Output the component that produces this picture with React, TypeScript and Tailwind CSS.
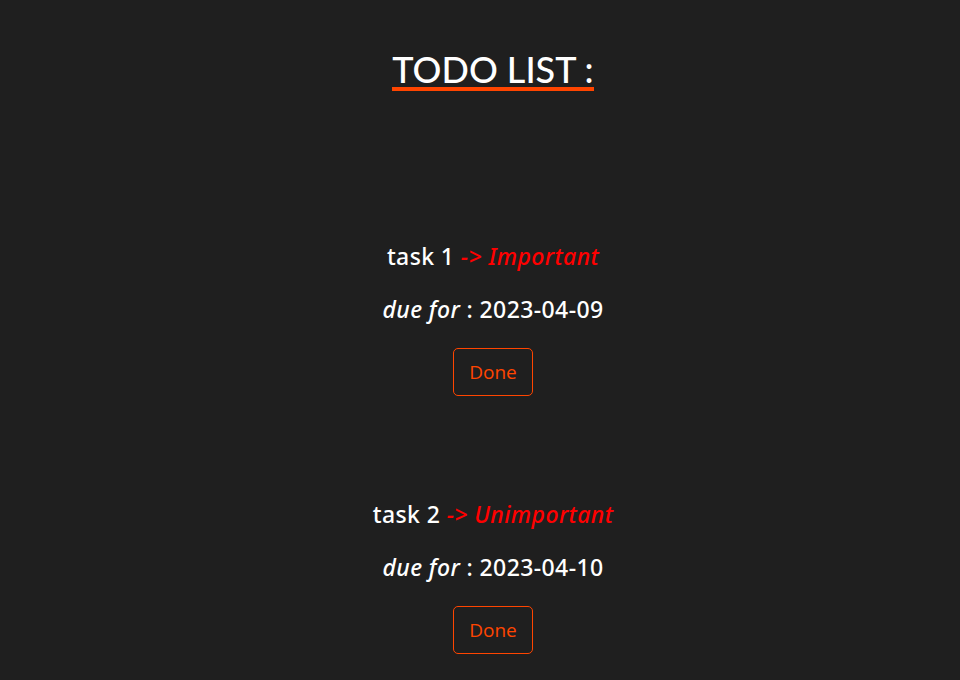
import React from "react";

const tasks = [
  { name: "task 1", label: "Important", due: "2023-04-09" },
  { name: "task 2", label: "Unimportant", due: "2023-04-10" },
];

export default function App() {
  return (
    <div className="min-h-[680px] w-full bg-[#1f1f1f] text-white flex flex-col items-center pl-[26px]" style={{ fontFamily: "Lato, 'Noto Sans', sans-serif" }}>
      <h1 className="mt-[50px] text-[36px] leading-[38px] font-medium">
        <span className="inline-block border-b-4 border-[#ff4500] leading-[35px]">TODO LIST :</span>
      </h1>
      <div className="mt-[150px] flex flex-col items-center gap-[103px]">
        {tasks.map((t) => (
          <div key={t.name} className="flex flex-col items-center">
            <p className="text-[23px] leading-[30px] font-medium tracking-[0.4px]" style={{ fontFamily: "'Noto Sans', sans-serif" }}>
              {t.name} <span className="text-[#ff0000] italic">-&gt; {t.label}</span>
            </p>
            <p className="mt-[23px] text-[23px] leading-[30px] font-medium tracking-[0.4px]" style={{ fontFamily: "'Noto Sans', sans-serif" }}>
              <span className="italic">due for</span> : {t.due}
            </p>
            <button className="mt-[24px] w-[80px] h-[48px] rounded-[5px] border border-[#ff4500] text-[#ff4500] text-[19px]" style={{ fontFamily: "'Open Sans', sans-serif" }}>
              Done
            </button>
          </div>
        ))}
      </div>
    </div>
  );
}
